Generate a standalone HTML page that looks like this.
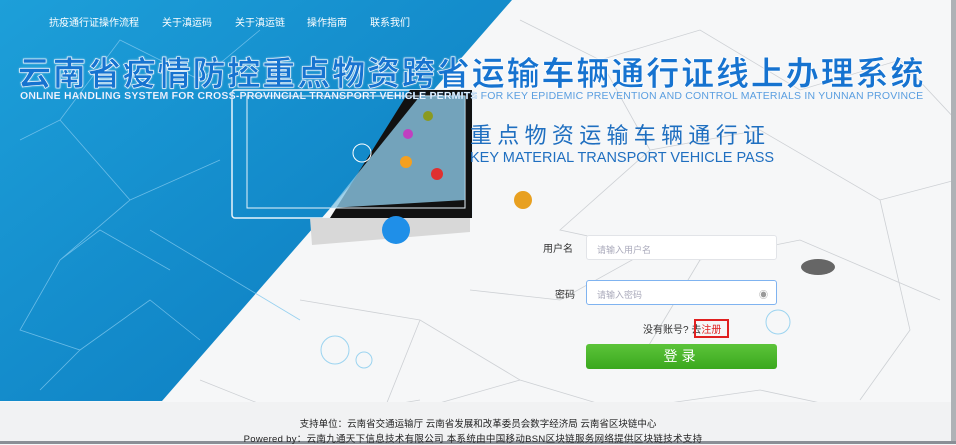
<!DOCTYPE html>
<html><head><meta charset="utf-8"><style>
*{margin:0;padding:0;box-sizing:border-box}
body{width:956px;height:444px;overflow:hidden;position:relative;background:#f6f7f8;font-family:"Liberation Sans","Noto Sans CJK SC",sans-serif}
.abs{position:absolute}
.nav{top:14px;font-size:10px;color:#fff;white-space:nowrap}
.title{left:18px;top:47px;font-size:33px;font-weight:bold;color:#1673d0;letter-spacing:1.9px;white-space:nowrap;-webkit-text-stroke:0.6px #fff;text-shadow:0 0 2px #fff}
.sub{left:20px;top:90px;font-size:10.5px;color:#5a9ee0;white-space:nowrap;letter-spacing:0.2px}
.inp{background:#fff;border:1px solid #e2e4e8;border-radius:3px;font-size:9px;color:#aab;padding:7px 10px;width:191px;height:25px}
</style></head><body>
<svg class="abs" style="left:0;top:0" width="956" height="444">
<defs><linearGradient id="g" x1="0" y1="0" x2="1" y2="1"><stop offset="0" stop-color="#1d9fd9"/><stop offset="1" stop-color="#0a78bd"/></linearGradient></defs>
<g stroke="#cdd0d4" stroke-width="0.8" fill="none">
<path d="M520,20 L600,60 L700,30 L800,90 L900,60 L956,120 M600,60 L650,150 L760,130 L880,200 L956,180 M650,150 L560,230 L700,260 L800,240 L940,300 M300,300 L420,320 L520,380 L620,410 L760,390 L900,420 M420,320 L380,420 L520,380 M880,200 L910,330 L860,400 M700,260 L640,360 M200,380 L300,420 L420,400 M470,290 L560,300 L650,250"/>
</g>
<polygon points="0,0 512,0 162,401 0,401" fill="url(#g)"/>
<g stroke="#7ec7ee" stroke-width="0.8" fill="none" opacity="0.8">
<path d="M20,140 L60,120 L130,200 L60,260 L20,330 L80,350 L150,300 L200,340 M60,120 L120,40 L200,80 L260,30 M130,200 L220,160 M60,260 L100,230 L170,270 M80,350 L40,390 M150,230 L300,320"/>
</g>
<rect x="232" y="90" width="240" height="128" fill="none" stroke="#e8f4fb" stroke-width="1.5" rx="3"/>
<polygon points="410,90 472,90 472,218 330,218" fill="#111"/>
<rect x="247" y="96" width="218" height="112" fill="none" stroke="#e8f4fb"/>
<polygon points="420,96 465,96 465,200 330,208" fill="#8cc8e6" opacity="0.8"/>
<path d="M310,218 L470,218 L470,232 L312,245 Z" fill="#d8d8d8"/>
<circle cx="396" cy="230" r="14" fill="#1f8fe8"/>
<circle cx="362" cy="153" r="9" fill="none" stroke="#fff"/>
<circle cx="406" cy="162" r="6" fill="#f4a020"/>
<circle cx="437" cy="174" r="6" fill="#e03030"/>
<circle cx="408" cy="134" r="5" fill="#c040c0"/>
<circle cx="428" cy="116" r="5" fill="#8a9a20"/>
<circle cx="523" cy="200" r="9" fill="#e8a020"/>
<ellipse cx="818" cy="267" rx="17" ry="8" fill="#666"/>
<circle cx="335" cy="350" r="14" fill="none" stroke="#9cd4f0"/>
<circle cx="364" cy="360" r="8" fill="none" stroke="#9cd4f0"/>
<circle cx="778" cy="322" r="12" fill="none" stroke="#9cd4f0"/>
<rect x="0" y="402" width="956" height="42" fill="#f1f2f3"/>
<rect x="0" y="441" width="956" height="3" fill="#8a8f96"/>
<rect x="951" y="0" width="5" height="441" fill="#aeb2b6"/>
</svg>
<div class="abs nav" style="left:49px">抗疫通行证操作流程</div>
<div class="abs nav" style="left:162px">关于滇运码</div>
<div class="abs nav" style="left:235px">关于滇运链</div>
<div class="abs nav" style="left:307px">操作指南</div>
<div class="abs nav" style="left:370px">联系我们</div>
<div class="abs title">云南省疫情防控重点物资跨省运输车辆通行证线上办理系统</div>
<div class="abs sub"><b style="color:#fff;-webkit-text-stroke:0.3px #5a9ee0">ONLINE HANDLING SYSTEM FOR CROSS-PROVINCIAL TRANSPORT VEHICLE PERMITS</b> FOR KEY EPIDEMIC PREVENTION AND CONTROL MATERIALS IN YUNNAN PROVINCE</div>
<div class="abs" style="left:470px;top:118px;font-size:22px;color:#1f6fc0;letter-spacing:5.3px;white-space:nowrap">重点物资运输车辆通行证</div>
<div class="abs" style="left:470px;top:150px;font-size:14.5px;color:#1f6fc0;white-space:nowrap">KEY MATERIAL TRANSPORT VEHICLE PASS</div>
<div class="abs" style="left:543px;top:240px;font-size:10px;color:#333">用户名</div>
<div class="abs inp" style="left:586px;top:235px">请输入用户名</div>
<div class="abs" style="left:555px;top:286px;font-size:10px;color:#333">密码</div>
<div class="abs inp" style="left:586px;top:280px;border-color:#7fb3f0">请输入密码<span style="position:absolute;right:8px;color:#999">◉</span></div>
<div class="abs" style="left:643px;top:321px;font-size:10px;color:#333;white-space:nowrap">没有账号? 去<span style="color:#e02020">注册</span></div>
<div class="abs" style="left:694px;top:319px;width:35px;height:19px;border:2px solid #e02020"></div>
<div class="abs" style="left:586px;top:344px;width:191px;height:25px;background:linear-gradient(#5cc43a,#3aa81e);border-radius:3px;color:#fff;font-size:14px;text-align:center;line-height:25px;letter-spacing:4px">登录</div>
<div class="abs" style="left:0;width:956px;top:416px;text-align:center;font-size:9.5px;color:#222">支持单位：云南省交通运输厅 云南省发展和改革委员会数字经济局 云南省区块链中心</div>
<div class="abs" style="left:0;width:946px;top:431px;text-align:center;font-size:9.5px;color:#222;letter-spacing:0.3px">Powered by：云南九通天下信息技术有限公司 本系统由中国移动BSN区块链服务网络提供区块链技术支持</div>
</body></html>
